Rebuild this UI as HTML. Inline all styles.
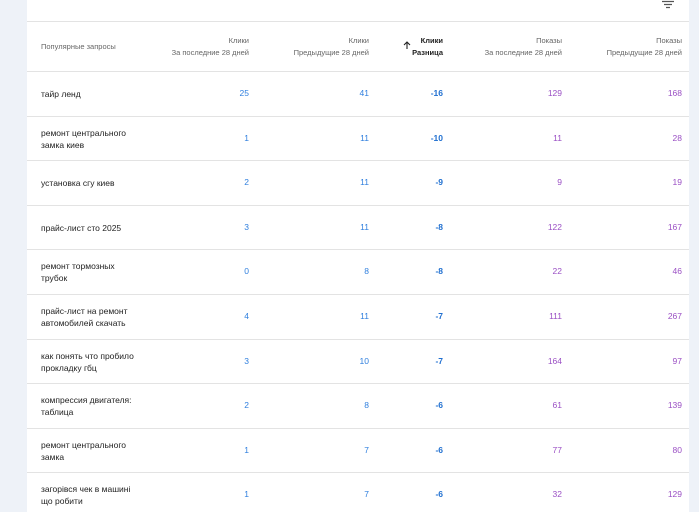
<!DOCTYPE html><html><head><style>
body{margin:0;width:699px;height:512px;background:#eef2f8;font-family:"Liberation Sans",sans-serif;overflow:hidden;position:relative}
.card{position:absolute;left:27px;top:0;width:662px;height:512px;background:#fff}
.line{position:absolute;left:27px;width:662px;height:1px;background:#e3e3e3}
.t{position:absolute;font-size:8.5px;white-space:nowrap}
.r{text-align:right}
.h{color:#666;font-size:7.5px;line-height:12px}
.q{color:#222;left:41px;line-height:12px}
.b{color:#2f7fde}.p{color:#9a4fc4}.d{color:#1f6fd0;font-weight:bold}
</style></head><body>
<div class="card"></div>
<svg style="position:absolute;left:661px;top:0" width="14" height="10"><path d="M1 1.5h12M3 4.5h8M5 7.5h4" stroke="#555" stroke-width="1.2"/></svg>
<div class="line" style="top:21px"></div>
<div class="t h" style="left:41px;top:41px">Популярные запросы</div>
<div class="t h r" style="right:450px;top:35px">Клики<br>За последние 28 дней</div>
<div class="t h r" style="right:330px;top:35px">Клики<br>Предыдущие 28 дней</div>
<div class="t h r" style="right:256px;top:35px;color:#222;font-weight:bold">Клики<br>Разница</div>
<svg style="position:absolute;left:403px;top:41px" width="8" height="9"><path d="M4 8V1M1 4l3-3 3 3" stroke="#222" stroke-width="1.1" fill="none"/></svg>
<div class="t h r" style="right:137px;top:35px">Показы<br>За последние 28 дней</div>
<div class="t h r" style="right:17px;top:35px">Показы<br>Предыдущие 28 дней</div>
<div id="rows"></div>
<script>
var d=[["тайр ленд",25,41,-16,129,168],["ремонт центрального<br>замка киев",1,11,-10,11,28],["установка сгу киев",2,11,-9,9,19],["прайс-лист сто 2025",3,11,-8,122,167],["ремонт тормозных<br>трубок",0,8,-8,22,46],["прайс-лист на ремонт<br>автомобилей скачать",4,11,-7,111,267],["как понять что пробило<br>прокладку гбц",3,10,-7,164,97],["компрессия двигателя:<br>таблица",2,8,-6,61,139],["ремонт центрального<br>замка",1,7,-6,77,80],["загорівся чек в машині<br>що робити",1,7,-6,32,129]];
var h="";d.forEach(function(r,i){var top=71+i*44.6,c=top+22;
h+='<div class="line" style="top:'+Math.round(top)+'px"></div>';
var two=r[0].indexOf("<br>")>0;
h+='<div class="t q" style="top:'+Math.round(c-(two?11:5))+'px">'+r[0]+'</div>';
var rs=[450,330,256,137,17],cl=["b","b","d","p","p"];
for(var k=0;k<5;k++)h+='<div class="t r '+cl[k]+'" style="right:'+rs[k]+'px;top:'+Math.round(c-5)+'px">'+r[k+1]+'</div>';});
document.getElementById("rows").innerHTML=h;
</script>
</body></html>
